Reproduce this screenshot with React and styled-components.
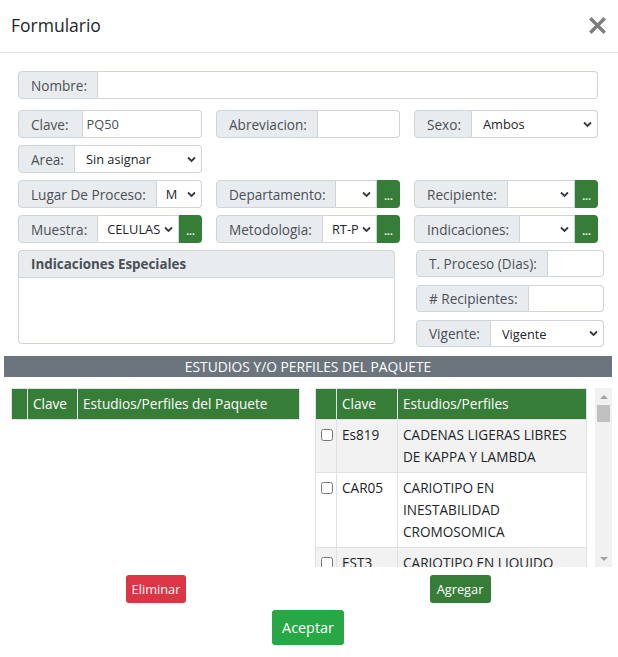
import React from "react";
import styled, { createGlobalStyle } from "styled-components";

const Global = createGlobalStyle`
  html, body { margin: 0; padding: 0; background: #fff; }
  body { font-family: "Open Sans", "Noto Sans", sans-serif; color: #212529; }
  * { box-sizing: border-box; }
`;

const Page = styled.div`
  width: 618px;
  height: 657px;
  overflow: hidden;
  background: #fff;
`;

const Header = styled.div`
  height: 53px;
  border-bottom: 1px solid #e3e6e9;
  display: flex;
  align-items: center;
  justify-content: space-between;
  padding: 0 11px 2px 11px;
`;

const Title = styled.h5`
  margin: 0;
  font-size: 17.5px;
  font-weight: 500;
  color: #212529;
`;

const Close = styled.button`
  border: 0;
  background: none;
  padding: 0;
  margin-right: 1px;
  display: flex;
  cursor: pointer;
`;

const Body = styled.div`
  padding: 18px 20px 0 18px;
`;

const Group = styled.div`
  display: flex;
  height: ${(p) => p.$h || 28}px;
  min-width: 0;
`;

const Addon = styled.span`
  flex: none;
  display: flex;
  align-items: center;
  padding: 0 ${(p) => p.$pr || 10}px 0 12px;
  background: #e9ecef;
  border: 1px solid #ced4da;
  border-radius: 4px 0 0 4px;
  color: #495057;
  font-size: 13.6px;
  white-space: nowrap;
`;

const TextInput = styled.div`
  flex: 1;
  min-width: 0;
  display: flex;
  align-items: center;
  padding: 0 4px;
  border: 1px solid #ced4da;
  border-left: 0;
  border-radius: ${(p) => (p.$mid ? "0" : "0 4px 4px 0")};
  font-size: 12.8px;
  color: #495057;
  background: #fff;
`;

const SelectBox = styled.div`
  flex: ${(p) => (p.$w ? "none" : "1")};
  width: ${(p) => (p.$w ? p.$w + "px" : "auto")};
  min-width: 0;
  display: flex;
  align-items: center;
  gap: 4px;
  padding: 0 5px 0 ${(p) => p.$pl || 11}px;
  border: 1px solid #ced4da;
  border-left: 0;
  border-radius: ${(p) => (p.$mid ? "0" : "0 4px 4px 0")};
  font-size: 12.8px;
  color: #212529;
  background: #fff;
`;

const SelectText = styled.span`
  flex: 1;
  min-width: 0;
  overflow: hidden;
  white-space: nowrap;
`;

const DotsButton = styled.button`
  flex: none;
  width: 23px;
  border: 0;
  border-radius: 0 4px 4px 0;
  background: #367e37;
  color: #fff;
  font-size: 10px;
  font-weight: 700;
  padding: 4px 0 0 0;
  line-height: 1;
  font-family: inherit;
`;

const Chevron = () => (
  <svg width="9" height="7" viewBox="0 0 9 7" style={{ flex: "none" }}>
    <path d="M1 1.5 L4.5 5 L8 1.5" fill="none" stroke="#343a40" strokeWidth="1.8" />
  </svg>
);

const Select = ({ value, w, mid, pl }) => (
  <SelectBox $w={w} $mid={mid} $pl={pl}>
    <SelectText>{value}</SelectText>
    <Chevron />
  </SelectBox>
);

const FullRow = styled.div`
  margin-bottom: 11px;
`;

const Grid3 = styled.div`
  display: grid;
  grid-template-columns: repeat(3, 184px);
  column-gap: 14px;
  row-gap: 7px;
`;

const Lower = styled.div`
  display: grid;
  grid-template-columns: 377px 188px;
  column-gap: 21px;
  margin-top: 7px;
`;

const Stack = styled.div`
  display: flex;
  flex-direction: column;
  gap: 8px;
`;

const AreaHead = styled.div`
  height: 28px;
  display: flex;
  align-items: center;
  padding: 0 12px;
  background: #e9ecef;
  border: 1px solid #ced4da;
  border-radius: 4px 4px 0 0;
  font-weight: 700;
  font-size: 13.4px;
  color: #495057;
`;

const TextArea = styled.div`
  height: 66px;
  border: 1px solid #ced4da;
  border-top: 0;
  border-radius: 0 0 4px 4px;
`;

const Section = styled.div`
  margin: 9px 6px 0 4px;
`;

const Bar = styled.div`
  height: 21px;
  background: #6c757d;
  color: #fff;
  font-size: 13.8px;
  display: flex;
  align-items: center;
  justify-content: center;
`;

const Cols = styled.div`
  display: grid;
  grid-template-columns: 304px 304px;
  margin-top: ${(p) => p.$mt || 11}px;
`;

const Col = styled.div`
  padding-left: 7px;
  display: flex;
  flex-direction: column;
`;

const Scroller = styled.div`
  height: 179px;
  width: 297px;
  display: flex;
  gap: 8px;
`;

const ScrollBody = styled.div`
  width: 272px;
  height: 100%;
  overflow-y: scroll;
  scrollbar-width: none;
  &::-webkit-scrollbar { display: none; }
`;

const FakeBar = styled.div`
  width: 17px;
  height: 100%;
  background: #f1f1f1;
  display: flex;
  flex-direction: column;
  align-items: center;
`;

const Arrow = styled.div`
  flex: none;
  height: 17px;
  width: 17px;
  display: flex;
  align-items: center;
  justify-content: center;
  &::before {
    content: "";
    width: 0;
    height: 0;
    border-left: 4px solid transparent;
    border-right: 4px solid transparent;
    ${(p) =>
      p.$down
        ? "border-top: 4px solid #a3a3a3;"
        : "border-bottom: 4px solid #a3a3a3;"}
  }
`;

const Track = styled.div`
  flex: 1;
  width: 100%;
  padding: 0 2px;
`;

const Thumb = styled.div`
  height: 17px;
  background: #c1c1c1;
`;

const Table = styled.table`
  border-collapse: collapse;
  width: ${(p) => p.$w}px;
  font-size: 13.6px;
  table-layout: fixed;
`;

const Th = styled.th`
  background: #367e37;
  color: #fff;
  font-weight: 400;
  text-align: left;
  padding: 4px 5px;
  line-height: 22px;
  border: 1px solid #dee2e6;
  width: ${(p) => (p.$w ? p.$w + "px" : "auto")};
`;

const Tr = styled.tr`
  background: ${(p) => (p.$odd ? "#f2f2f2" : "#fff")};
`;

const Td = styled.td`
  padding: 4px 5px;
  line-height: 22px;
  border: 1px solid #dee2e6;
  vertical-align: top;
  color: #212529;
`;

const Check = styled.input`
  width: 12px;
  height: 12px;
  margin: 5px 0 0 0;
`;

const BtnRow = styled.div`
  display: flex;
  justify-content: center;
  padding-top: ${(p) => p.$pt || 0}px;
`;

const Btn = styled.button`
  border: 0;
  border-radius: 3px;
  color: #fff;
  background: ${(p) => p.$bg};
  font-family: inherit;
  font-size: ${(p) => p.$fs || 12.8}px;
  height: ${(p) => p.$h}px;
  width: ${(p) => p.$w}px;
  padding: 0;
`;

const rows = [
  ["Es819", "CADENAS LIGERAS LIBRES DE KAPPA Y LAMBDA"],
  ["CAR05", "CARIOTIPO EN INESTABILIDAD CROMOSOMICA"],
  ["EST3", "CARIOTIPO EN LIQUIDO AMNIOTICO"],
  ["CAR01", "CARIOTIPO EN SANGRE PERIFERICA"],
  ["CAR02", "CARIOTIPO EN MEDULA OSEA"],
  ["Es820", "CITOMETRIA DE FLUJO"],
  ["Es821", "CROMOSOMA FILADELFIA"],
  ["Es822", "DETECCION DE MICRODELECIONES"],
  ["Es823", "FISH PARA DELECION 5Q"],
  ["Es824", "FISH PARA TRISOMIA 21"],
  ["Es825", "FRAGILIDAD CROMOSOMICA"],
  ["Es826", "GEN BCR/ABL CUANTITATIVO"],
  ["Es827", "GEN JAK2 V617F"],
  ["Es828", "INMUNOFENOTIPO DE LEUCEMIAS"],
  ["Es829", "INMUNOFIJACION EN SUERO"],
  ["Es830", "INMUNOFIJACION EN ORINA"],
  ["Es831", "PANEL DE LINFOMAS"],
  ["Es832", "PCR PARA CITOMEGALOVIRUS"],
  ["Es833", "PCR PARA HEPATITIS C"],
  ["Es834", "PCR PARA VIH CARGA VIRAL"],
  ["Es835", "TIPIFICACION HLA CLASE I"],
  ["Es836", "TIPIFICACION HLA CLASE II"],
  ["Es837", "TRANSLOCACION PML/RARA"],
  ["Es838", "PANEL DE MIELOMA MULTIPLE"],
  ["Es839", "CARIOTIPO EN TEJIDO"],
  ["Es840", "ELECTROFORESIS DE PROTEINAS"],
  ["Es841", "CADENAS PESADAS EN SUERO"],
  ["Es842", "QUIMERISMO POST TRASPLANTE"],
];

const CloseIcon = () => (
  <svg width="17" height="17" viewBox="0 0 17 17">
    <path d="M2.5 2.5 L14.5 14.5 M14.5 2.5 L2.5 14.5" stroke="#7d7d7d" strokeWidth="3.4" strokeLinecap="square" />
  </svg>
);

export default function App() {
  return (
    <Page>
      <Global />
      <Header>
        <Title>Formulario</Title>
        <Close aria-label="Cerrar">
          <CloseIcon />
        </Close>
      </Header>
      <Body>
        <FullRow>
          <Group>
            <Addon>Nombre:</Addon>
            <TextInput />
          </Group>
        </FullRow>
        <Grid3>
          <Group>
            <Addon $pr={13}>Clave:</Addon>
            <TextInput>PQ50</TextInput>
          </Group>
          <Group>
            <Addon>Abreviacion:</Addon>
            <TextInput />
          </Group>
          <Group>
            <Addon>Sexo:</Addon>
            <Select value="Ambos" />
          </Group>
          <Group>
            <Addon>Area:</Addon>
            <Select value="Sin asignar" />
          </Group>
          <div />
          <div />
          <Group>
            <Addon>Lugar De Proceso:</Addon>
            <Select value="M" pl={9} />
          </Group>
          <Group>
            <Addon>Departamento:</Addon>
            <Select value="" mid />
            <DotsButton>...</DotsButton>
          </Group>
          <Group>
            <Addon>Recipiente:</Addon>
            <Select value="" mid />
            <DotsButton>...</DotsButton>
          </Group>
          <Group>
            <Addon>Muestra:</Addon>
            <Select value="CELULAS" mid pl={9} />
            <DotsButton>...</DotsButton>
          </Group>
          <Group>
            <Addon>Metodologia:</Addon>
            <Select value="RT-PCR" mid pl={9} />
            <DotsButton>...</DotsButton>
          </Group>
          <Group>
            <Addon>Indicaciones:</Addon>
            <Select value="" mid />
            <DotsButton>...</DotsButton>
          </Group>
        </Grid3>
        <Lower>
          <div>
            <AreaHead>Indicaciones Especiales</AreaHead>
            <TextArea />
          </div>
          <Stack>
            <Group $h={27}>
              <Addon>T. Proceso (Dias):</Addon>
              <TextInput />
            </Group>
            <Group $h={27}>
              <Addon>{"# Recipientes:"}</Addon>
              <TextInput />
            </Group>
            <Group $h={27}>
              <Addon>Vigente:</Addon>
              <Select value="Vigente" />
            </Group>
          </Stack>
        </Lower>
      </Body>
      <Section>
        <Bar>ESTUDIOS Y/O PERFILES DEL PAQUETE</Bar>
        <Cols>
          <Col>
            <Table $w={289}>
              <thead>
                <tr>
                  <Th $w={16} />
                  <Th $w={50}>Clave</Th>
                  <Th>Estudios/Perfiles del Paquete</Th>
                </tr>
              </thead>
            </Table>
          </Col>
          <Col>
            <Scroller>
              <ScrollBody>
                <Table $w={272}>
                  <thead>
                    <tr>
                      <Th $w={21} />
                      <Th $w={61}>Clave</Th>
                      <Th>Estudios/Perfiles</Th>
                    </tr>
                  </thead>
                  <tbody>
                    {rows.map(([k, n], i) => (
                      <Tr key={k} $odd={i % 2 === 0}>
                        <Td>
                          <Check type="checkbox" />
                        </Td>
                        <Td>{k}</Td>
                        <Td>{n}</Td>
                      </Tr>
                    ))}
                  </tbody>
                </Table>
              </ScrollBody>
              <FakeBar aria-hidden="true">
                <Arrow />
                <Track>
                  <Thumb />
                </Track>
                <Arrow $down />
              </FakeBar>
            </Scroller>
          </Col>
        </Cols>
        <Cols $mt={8}>
          <BtnRow>
            <Btn $bg="#dc3545" $w={60} $h={28}>Eliminar</Btn>
          </BtnRow>
          <BtnRow>
            <Btn $bg="#367e37" $w={61} $h={28}>Agregar</Btn>
          </BtnRow>
        </Cols>
        <BtnRow $pt={7}>
          <Btn $bg="#28a745" $w={72} $h={35} $fs={14.4}>Aceptar</Btn>
        </BtnRow>
      </Section>
    </Page>
  );
}
